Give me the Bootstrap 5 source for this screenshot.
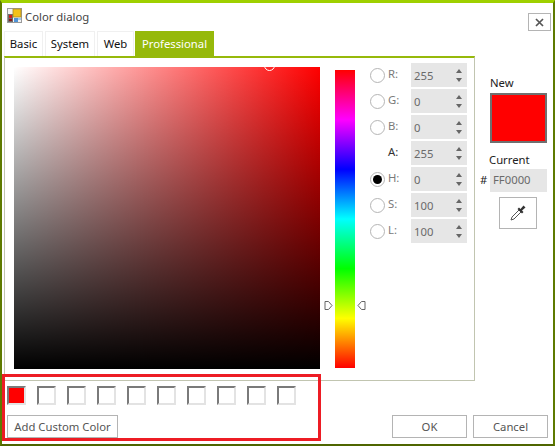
<!DOCTYPE html>
<html lang="en"><head><meta charset="utf-8"><title>Color dialog</title>
<link rel="stylesheet" href="https://cdn.jsdelivr.net/npm/bootstrap@5.3.0/dist/css/bootstrap.min.css">
<style>
html,body{margin:0;background:#fff;overflow:hidden}
body{font-family:"Noto Sans","Open Sans",sans-serif;font-size:11.3px;line-height:16px;color:#222}
.win{position:relative;width:555px;height:446px;border-left:2px solid #5e7a00;border-right:2px solid #5e7a00;border-bottom:2px solid #4f6600;border-top:3px solid #9fd000;background:#fff;box-sizing:border-box}
.ttl{height:28px;padding:5px 0 0 5px;color:#444}
.ttl span{margin:1px 0 0 3px;font-size:11.3px}
.closeb{width:23px;height:18px;border:1px solid #b4b4b4;margin:5px 2px 0 auto;background:#fff;padding:0}
.tabsb{height:25px;padding-left:2px;gap:2px}
.tabi{height:25px;background:#fff;border:1px solid #f0f0f0;border-bottom:0;padding:4px 0 0;text-align:center;color:#111}
.tabi.on{background:#96b90a;color:#fff;border-color:#96b90a;margin-left:-1px}
.panel{margin-left:2px;width:471px;height:325px;border:1px solid #c1c5b0;border-top:2px solid #96b90a;padding-left:9px;padding-top:9px}
.sv{width:306px;height:302px;background:linear-gradient(to bottom,rgba(0,0,0,0),#000),linear-gradient(to right,#fff,#ff0000);position:relative;overflow:hidden;flex:none}
.sv i{position:absolute;left:250px;top:-7px;width:11px;height:11px;border:1px solid #fff;border-radius:50%}
.huew{position:relative;width:20px;height:298px;margin:3px 0 0 15px;flex:none;background:linear-gradient(to bottom,#f00,#f0f 16.67%,#00f 33.33%,#0ff 50%,#0f0 66.67%,#ff0 83.33%,#f00)}
.huew svg{position:absolute;top:231px}
.vals{margin:-4px 0 0 15px;width:97px}
.vrow{height:24px;margin-bottom:2px;color:#7a7a7a}
.rd{width:15px;height:15px;border:1px solid #b5b5b5;border-radius:50%;background:#fff;margin:0;flex:none}
.rd.on{display:flex;align-items:center;justify-content:center}
.rd.on::after{content:"";width:9px;height:9px;background:#000;border-radius:50%}
.rdn{width:15px;flex:none}
.lbl{width:23px;margin-left:3px;flex:none;margin-top:-2px}
.lbl.dk{color:#333}
.spin{width:56px;height:24px;background:#e6e6e6;color:#6a6a6a;padding:5px 0 0 3px;position:relative;flex:none}
.spin b,.spin u{position:absolute;left:45px;width:0;height:0;border-left:3px solid transparent;border-right:3px solid transparent}
.spin b{top:6px;border-bottom:4px solid #666}
.spin u{top:15px;border-top:4px solid #666}
.nw{position:absolute;left:488px;top:72px}
.swb{position:absolute;left:488px;top:90px;width:57px;height:50px;background:#f00;border:2px solid #6f6f6f}
.cur{position:absolute;left:487px;top:149px}
.hash{position:absolute;left:478px;top:169px;color:#222}
.hex{position:absolute;left:488px;top:166px;width:57px;height:23px;background:#e6e6e6;color:#6a6a6a;padding:3px 0 0 3px}
.drop{position:absolute;left:497px;top:194px;width:38px;height:32px;border:1px solid #b4b4b4;background:#fff;padding:0}
.foot{padding-left:5px;padding-top:5px}
.cwell{width:19px;height:19px;border:2px solid #e3e3e3;border-top-color:#7a7a7a;border-left-color:#7a7a7a;background:#fff;margin-right:11px;flex:none}
.cwell.fill{background:#f00}
.fb{height:23px;border:1px solid #b4b4b4;background:#fff;color:#555;padding:0;line-height:20px;border-radius:0;font-size:11.3px}
.footb{margin-top:10px}
.addb{width:111px}
.okb{width:75px}
.cancelb{margin-left:6px;margin-right:5px}
.mark0{position:absolute;left:0;top:371px;width:319px;height:67px;border:3px solid #ed1c24;pointer-events:none}
</style></head><body>
<div class="win">
 <div class="ttl d-flex align-items-start">
  <svg width="15" height="15" viewBox="0 0 15 15"><rect x=".5" y=".5" width="14" height="14" fill="#f2f2f2" stroke="#9a9a9a"/><rect x="1" y="6" width="5" height="8" fill="#6d6d6d"/><rect x="2" y="7" width="3" height="3" fill="#d21f1f"/><rect x="2" y="11" width="3" height="2" fill="#8f1616"/><rect x="6" y="1" width="8" height="8" fill="#f3c21a" stroke="#a88a2a" stroke-width=".8"/><rect x="7" y="10" width="4" height="4" fill="#4f93d6"/><rect x="11" y="10" width="3" height="2" fill="#9cc8ec"/></svg>
  <span>Color dialog</span>
  <button class="closeb d-flex align-items-center justify-content-center" aria-label="Close"><svg width="9" height="9" viewBox="0 0 9 9"><path d="M1 1L8 8M8 1L1 8" stroke="#555" stroke-width="1.7"/></svg></button>
 </div>
 <div class="tabsb d-flex">
  <div class="tabi" style="width:39px">Basic</div>
  <div class="tabi" style="width:50px">System</div>
  <div class="tabi" style="width:37px">Web</div>
  <div class="tabi on" style="width:79px">Professional</div>
 </div>
 <div class="panel d-flex">
  <div class="sv"><i></i></div>
  <div class="huew">
   <svg width="9" height="9" viewBox="0 0 9 9" style="left:-11px"><path d="M1 .5H4.5L8 4.5L4.5 8.5H1Z" fill="#fff" stroke="#666"/></svg>
   <svg width="9" height="9" viewBox="0 0 9 9" style="left:22px"><path d="M8 .5H4.5L1 4.5L4.5 8.5H8Z" fill="#fff" stroke="#666"/></svg>
  </div>
  <div class="vals">
   <div class="vrow d-flex align-items-center"><span class="rd"></span><span class="lbl">R:</span><div class="spin">255<b></b><u></u></div></div>
   <div class="vrow d-flex align-items-center"><span class="rd"></span><span class="lbl">G:</span><div class="spin">0<b></b><u></u></div></div>
   <div class="vrow d-flex align-items-center"><span class="rd"></span><span class="lbl">B:</span><div class="spin">0<b></b><u></u></div></div>
   <div class="vrow d-flex align-items-center"><span class="rdn"></span><span class="lbl dk">A:</span><div class="spin">255<b></b><u></u></div></div>
   <div class="vrow d-flex align-items-center"><span class="rd on"></span><span class="lbl">H:</span><div class="spin">0<b></b><u></u></div></div>
   <div class="vrow d-flex align-items-center"><span class="rd"></span><span class="lbl">S:</span><div class="spin">100<b></b><u></u></div></div>
   <div class="vrow d-flex align-items-center"><span class="rd"></span><span class="lbl">L:</span><div class="spin">100<b></b><u></u></div></div>
  </div>
 </div>
 <div class="nw">New</div><div class="swb"></div>
 <div class="cur">Current</div><div class="hash">#</div><div class="hex">FF0000</div>
 <button class="drop d-flex align-items-center justify-content-center" aria-label="Pick colour"><svg width="18" height="18" viewBox="0 0 18 18"><path d="M2 16L3 13L10 6L12 8L5 15Z" fill="#fff" stroke="#555" stroke-width="1"/><path d="M8.500 5L13 9.500L14.500 8L13 6.500L16.500 3.500L14.500 1.500L11.500 5L10 3.500Z" fill="#333"/></svg></button>
 <div class="foot">
  <div class="d-flex">
   <div class="cwell fill"></div><div class="cwell"></div><div class="cwell"></div><div class="cwell"></div><div class="cwell"></div><div class="cwell"></div><div class="cwell"></div><div class="cwell"></div><div class="cwell"></div><div class="cwell"></div>
  </div>
  <div class="d-flex footb">
   <button class="btn fb addb">Add Custom Color</button>
   <button class="btn fb okb ms-auto">OK</button>
   <button class="btn fb okb cancelb">Cancel</button>
  </div>
 </div>
 <div class="mark0"></div>
</div>
</body></html>
